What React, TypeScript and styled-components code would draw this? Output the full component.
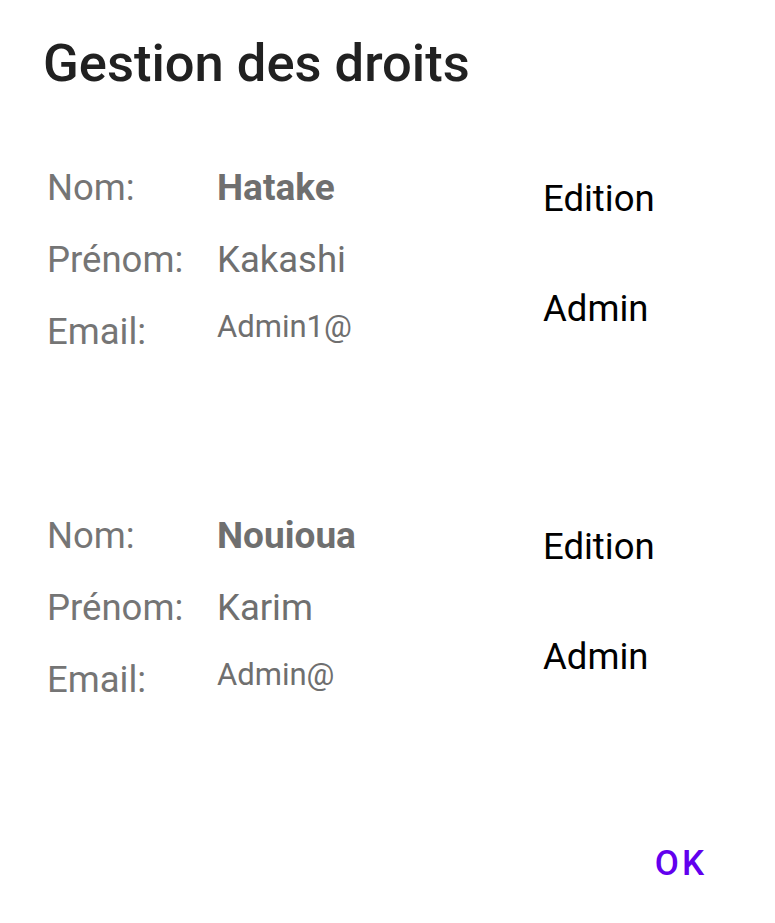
import styled, { createGlobalStyle } from 'styled-components'

const GlobalStyle = createGlobalStyle`
  body {
    margin: 0;
    background: #ffffff;
    font-family: Roboto, "Liberation Sans", sans-serif;
  }
`

const Dialog = styled.div`
  display: flex;
  flex-direction: column;
  padding: 32px 0 0 43px;
  width: 775px;
  box-sizing: border-box;
`

const Title = styled.h1`
  margin: 0 0 58px 0;
  font-size: 52.5px;
  line-height: 62px;
  font-weight: 500;
  color: #212121;
`

const Record = styled.div`
  display: flex;
  margin-left: 4px;
`

const Spacer = styled.div<{ $height: number }>`
  height: ${(p) => p.$height}px;
`

const Fields = styled.div`
  display: grid;
  grid-template-columns: 170px 326px;
  grid-auto-rows: 72px;
`

const Label = styled.span`
  font-size: 36.5px;
  line-height: 72px;
  color: #757575;
`

const Value = styled.span<{ $bold?: boolean }>`
  font-size: ${(p) => (p.$bold ? 37 : 36.5)}px;
  line-height: 72px;
  color: #6f6f6f;
  font-weight: ${(p) => (p.$bold ? 700 : 400)};
`

const EmailValue = styled.span`
  font-size: 31px;
  line-height: 62px;
  color: #6f6f6f;
  align-self: start;
`

const Roles = styled.div`
  display: flex;
  flex-direction: column;
  gap: 54px;
  padding-top: 19px;
`

const Role = styled.span`
  font-size: 36.5px;
  line-height: 56px;
  color: #000000;
`

const Actions = styled.div`
  display: flex;
  justify-content: flex-end;
  padding-right: 68px;
  margin-top: 128px;
`

const OkButton = styled.button`
  background: none;
  border: none;
  padding: 0;
  font-family: Roboto, "Liberation Sans", sans-serif;
  font-size: 35px;
  line-height: 40px;
  font-weight: 500;
  letter-spacing: 3px;
  color: #6200ee;
  cursor: pointer;
`

const users = [
  { nom: 'Hatake', prenom: 'Kakashi', email: 'Admin1@' },
  { nom: 'Nouioua', prenom: 'Karim', email: 'Admin@' },
]

export default function App() {
  return (
    <>
      <GlobalStyle />
      <Dialog>
        <Title>Gestion des droits</Title>
        {users.map((user, index) => (
          <div key={user.email}>
            {index > 0 && <Spacer $height={132} />}
            <Record>
              <Fields>
                <Label>Nom:</Label>
                <Value $bold>{user.nom}</Value>
                <Label>Prénom:</Label>
                <Value>{user.prenom}</Value>
                <Label>Email:</Label>
                <EmailValue>{user.email}</EmailValue>
              </Fields>
              <Roles>
                <Role>Edition</Role>
                <Role>Admin</Role>
              </Roles>
            </Record>
          </div>
        ))}
        <Actions>
          <OkButton>OK</OkButton>
        </Actions>
      </Dialog>
    </>
  )
}
